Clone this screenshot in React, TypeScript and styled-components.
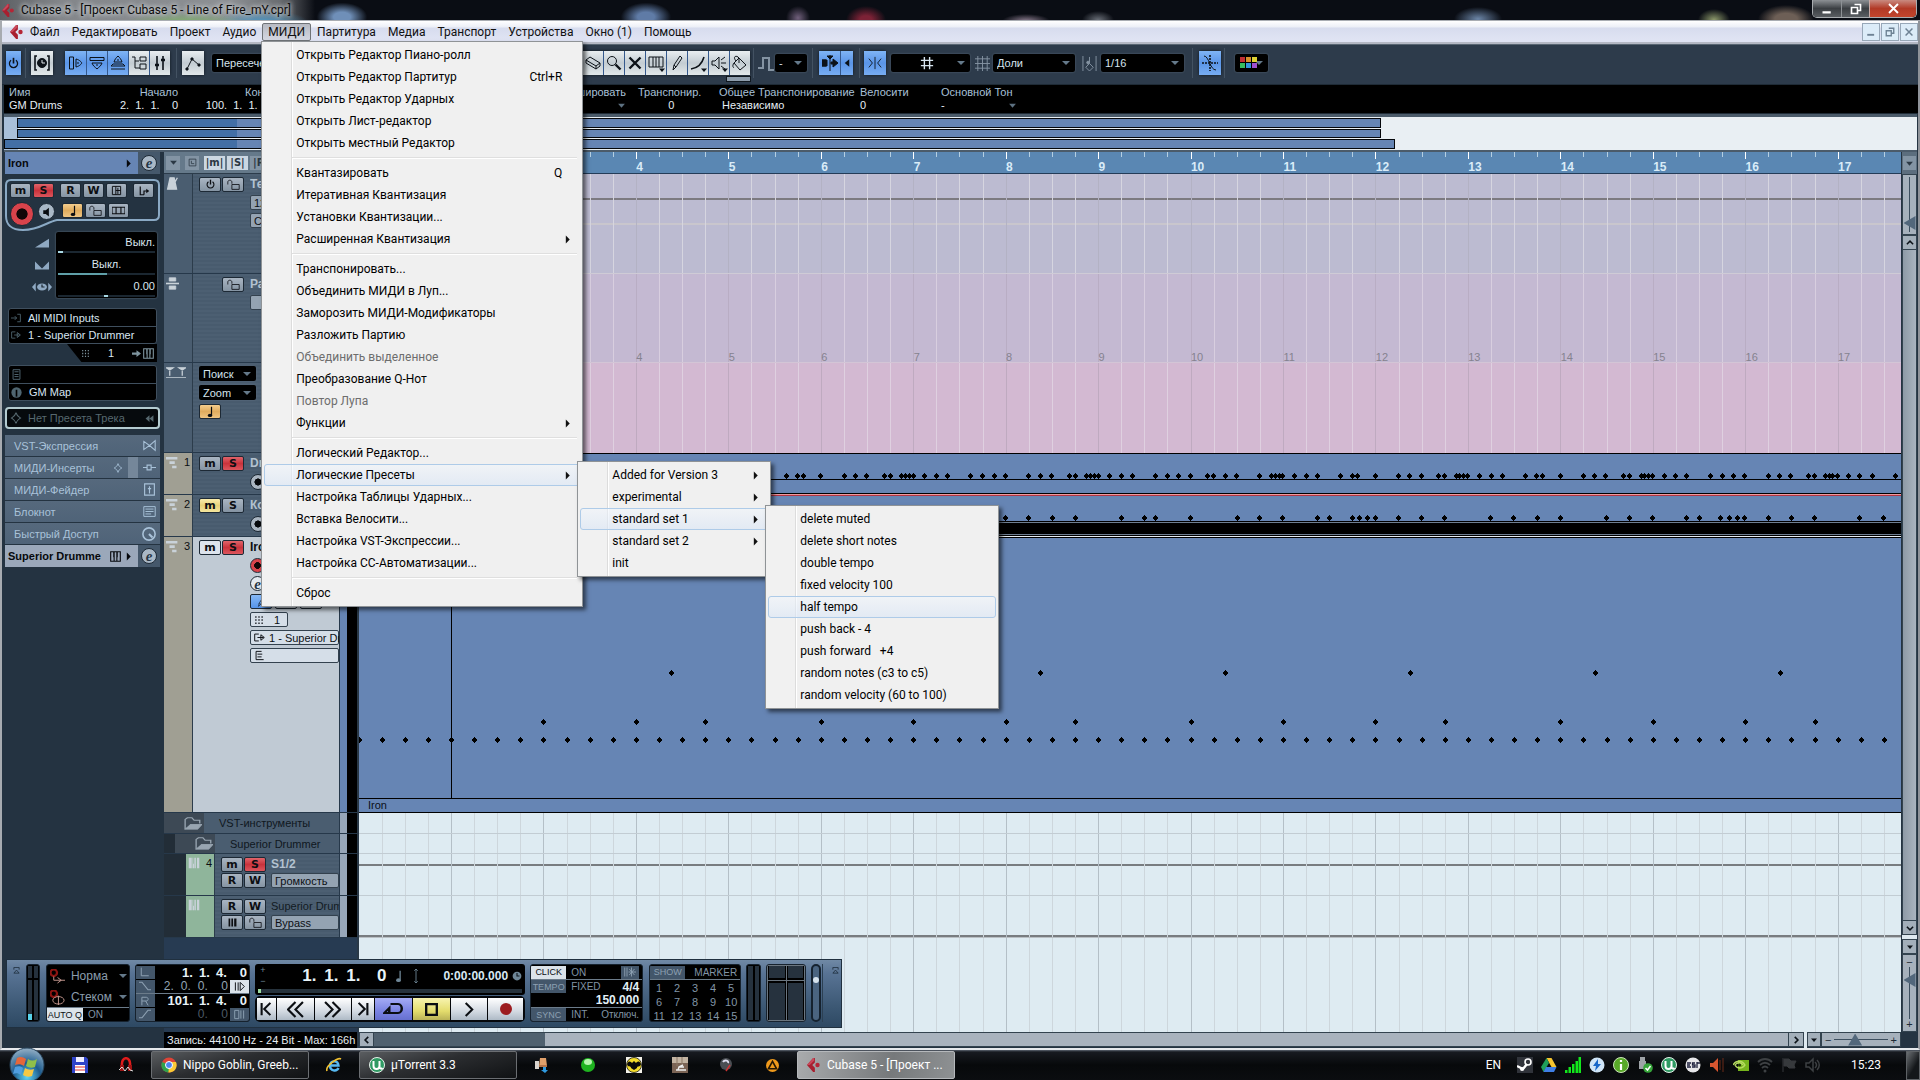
import React from 'react';
import styled, { createGlobalStyle, css } from 'styled-components';

const UI = 'Roboto, "Open Sans", sans-serif';
const PANEL = '"Liberation Sans", Arial, sans-serif';
const CAPS = '"DejaVu Sans", sans-serif';

const Global = createGlobalStyle`
  * { box-sizing: border-box; }
  html, body, #root { height: 100%; }
  body { margin: 0; overflow: hidden; background: #0a0d13; font-family: ${PANEL}; font-size: 11px; }
  button, select, input { font: inherit; color: inherit; margin: 0; padding: 0; border: 0; background: none; border-radius: 0; }
  svg { display: block; flex: none; }
`;

/* ---------- glyphs ---------- */

const GLYPHS: Record<string, React.ReactNode> = {
  power: <><path d="M5 4a5 5 0 1 0 6 0" strokeWidth="1.600" /><path d="M8 1v7" strokeWidth="2" /></>,
  clockBox: <><path d="M3 1H1v14h2M13 1h2v14h-2" strokeWidth="1.6" /><circle cx="8" cy="8" r="4.5" fill="currentColor" /><path d="M8 5v3h3" stroke="#dfe5ea" /></>,
  inspector: <><path d="M1.500 2h4v12h-4z" /><path d="M8 4c4 1 5 3 6 4-1 1-2 3-6 4zM9 8h2" /></>,
  infoline: <><path d="M1 2.500h14v3H1z" /><path d="M3 8h10c-1 3-3 4-5 6-2-2-4-3-5-6zM8 9v2" /></>,
  overview: <><path d="M8 1c2 2 3 3 4 6H4c1-3 2-4 4-6zM8 4v2M3 9h10l2 2H1zM1 14h14" /></>,
  tracks: <><path d="M4 2v11h5M4 6h4M9 2h6v4H9zM9 9h6v5H9zM1 2h3" /></>,
  mixer: <><path d="M5 1v14M11 1v14" strokeWidth="1.600" /><path d="M3 10h4M9 5h4" strokeWidth="2.400" /></>,
  automation: <><path d="M2 14 7 4l7 6" /><path d="M1 13h2v2H1zM6 3h2v2H6zM13 9h2v2h-2z" fill="currentColor" /></>,
  arrow: <path d="M4 1v12l3-3 2 5 2-1-2-4h4z" fill="currentColor" />,
  scissors: <path d="M4 14 12 2M12 14 4 2M2 14h3M11 14h3" />,
  eraser: <path d="m1 5 4-3 10 6-4 3zM1 5v3l10 6v-3M11 14l4-3V8" />,
  loupe: <><circle cx="6" cy="6" r="4.500" /><path d="m9.500 9.500 5 5" strokeWidth="2.400" /></>,
  cross: <path d="m2.500 2.500 11 11M13.500 2.500l-11 11" strokeWidth="2.400" />,
  mute: <path d="M1 2h14v10H1zM5 2v10M8 2v10M11 2v10" />,
  pencil: <path d="m4 15 1-5 6-9 2 2-6 9zM5 10l2 2" />,
  curve: <path d="M1 14C8 13 12 9 14 2" strokeWidth="1.600" />,
  speaker: <path d="M1 6h3l4-4v12l-4-4H1zM10 5l4-3M10 8h5M10 11l4 3" />,
  monitor: <path d="M2 5h4l5-4v14l-5-4H2z" fill="currentColor" stroke="none" />,
  bucket: <path d="m7 3 7 7-6 5-6-7zM4 6c-4-5 1-6 3-3v5M2 8c-2 3-1 4 0 5" />,
  step: <path d="M0 13h5V3h6v12h5" strokeWidth="2" />,
  autoscroll: <><path d="M8 0v16M0 5h4v6H0z" /><path d="M0 5h5v6H0zM9 7h2V4l5 4-5 4V9H9zM5 1h6L8 4z" fill="currentColor" /></>,
  left: <path d="M11 3v10L5 8z" fill="currentColor" stroke="none" />,
  snap: <path d="M8 1v14M1 3l4 5-4 5M15 3l-4 5 4 5" />,
  grid: <path d="M5 1v14M11 1v14M1 5h14M1 11h14" strokeWidth="1.600" />,
  gridFine: <path d="M3 0v16M8 0v16M13 0v16M0 3h16M0 8h16M0 13h16" />,
  quant: <><path d="M1 0v16M15 0v16M8 1v6M8 8l4 4-4 4-4-4z" /><circle cx="6.500" cy="7" r="1.500" fill="currentColor" /></>,
  crossfade: <><path d="M2 1c5 0 6 14 12 14" /><path d="M8 0v16M0 8h16" strokeDasharray="2 1" strokeWidth="1.600" /></>,
  lock: <path d="M1 8V5c0-3 5-3 5 0v2M6 8h9v6H6z" />,
  note: <><path d="M10 1v11" strokeWidth="1.600" /><ellipse cx="8" cy="12.500" rx="3" ry="2.300" fill="currentColor" stroke="none" /></>,
  lanes: <path d="M0 4h16v8H0zM5 4v8M11 4v8" strokeWidth="1.400" />,
  panel: <path d="M2 2h12v12H2zM7 2v12M7 8h7M10 4v9" strokeWidth="1.400" />,
  inout: <><path d="M3 2v11h5M8 13V8h5" strokeWidth="1.600" /><path d="m11 5 4 3-4 3z" fill="currentColor" stroke="none" /></>,
  metronome: <path d="M5 1h5l3 14H2zM14 1 8 12" fill="currentColor" strokeWidth="1.600" />,
  signature: <><path d="M4 1h8v4H4zM4 11h8v4H4z" fill="currentColor" /><path d="M0 8h16" strokeWidth="2" /></>,
  midi: <path d="M0 1h13v3H0zM4 6h6v3H4zM7 11h5v3H7z" fill="currentColor" stroke="none" />,
  keys: <path d="M1 1h4v14H1zM6 1h1v8h1v6H6zM8.500 1h2v14h-2zM12 1h3v14h-3z" fill="currentColor" stroke="none" />,
  bars: <path d="M1 1h3v14H1zM6 1h3v14H6zM11 1h4v14h-4z" fill="currentColor" stroke="none" />,
  piano: <path d="M1 1h14v14H1zM6 1v14M10 1v14M5.500 1v8M10.500 1v8" strokeWidth="1.600" />,
  folder: <><path d="M1 15V3l2-2h4l2 3h5v4" strokeWidth="1.200" /><path d="M1 15 6 9h10l-4 6z" fill="currentColor" /></>,
  volume: <path d="M0 13 16 3v10z" fill="currentColor" stroke="none" />,
  pan: <path d="M0 4v9h16V4l-8 8z" fill="currentColor" stroke="none" />,
  delay: <><path d="M3 3v10L0 8zM13 3v10l3-5z" fill="currentColor" stroke="none" /><circle cx="8" cy="8" r="4" fill="currentColor" stroke="none" /><path d="M8 5v3h2" stroke="#1c2833" /></>,
  input: <path d="M0 8h9M6 5l3 3-3 3M10 2h5v12h-5" strokeWidth="1.400" />,
  output: <path d="M7 3H1v10h6M5 8h9M10 4l5 4-5 4z" strokeWidth="1.400" />,
  dots: <path d="M2 3h2M7 3h2M12 3h2M2 8h2M7 8h2M12 8h2M2 13h2M7 13h2M12 13h2" strokeWidth="2.400" />,
  toRight: <path d="M0 6h8V2l8 6-8 6v-4H0z" fill="currentColor" stroke="none" />,
  list: <path d="M3 1h10v14H3zM5 4h6M5 8h6M5 11h6" strokeWidth="1.400" />,
  drum: <><circle cx="8" cy="8" r="7.500" fill="currentColor" stroke="none" /><path d="M8 4v10" stroke="#000" strokeWidth="2.400" /></>,
  diamond: <path d="M8 1c1 4 3 5 6 7-3 2-5 3-6 7-1-4-3-5-6-7 3-2 5-3 6-7z" strokeWidth="1.400" />,
  expression: <path d="m1 3 7 5-7 5zM15 2v12L8 8z" strokeWidth="1.300" />,
  slider: <path d="M0 8h5M5 5h5v6H5zM10 8h6" strokeWidth="1.400" />,
  fader: <path d="M2 1h12v14H2zM8 4v9M6 7h4" strokeWidth="1.400" />,
  notepad: <path d="M1 2h14v12H1zM3 5h10M3 8h10M3 11h7" strokeWidth="1.200" />,
  knob: <><circle cx="8" cy="8" r="7" strokeWidth="1.800" /><path d="m8 8 4 4" strokeWidth="2.400" /></>,
  markers: <path d="M0 2h6L3 5zM10 2h6l-3 3zM0 14h16M3 6v6M13 6v6" fill="currentColor" />,
  mono: <path d="M3 2v12h11M3 2h8M5 6h7M5 10h6" strokeWidth="1.400" />,
  clock: <><circle cx="8" cy="8" r="7" fill="currentColor" stroke="none" /><path d="M8 3v5h4" stroke="#10181f" strokeWidth="1.800" /></>,
  updown: <path d="M8 0v16M6 2l2-2 2 2M6 14l2 2 2-2" />,
  recCurve: <><circle cx="4" cy="4" r="3.500" stroke="#8b1512" strokeWidth="2.400" /><path d="M4 8v4h12M8 9l4 3-4 3" stroke="#c79a91" /></>,
  recStack: <><circle cx="4" cy="4" r="3.500" stroke="#8b1512" strokeWidth="2.400" /><ellipse cx="9" cy="11" rx="6" ry="4" stroke="#c79a91" /><path d="M9 6v10" stroke="#c79a91" /></>,
  locL: <path d="M2 1v13h12" strokeWidth="1.600" />,
  punchIn: <path d="M0 3h4l8 10h4" strokeWidth="1.600" />,
  punchOut: <path d="M0 13h4l8-10h4" strokeWidth="1.600" />,
  locR: <path d="M3 15V2h7c4 0 4 6 0 6H3M9 8l4 7" strokeWidth="1.600" />,
  preroll: <path d="M2 2v12M6 2v12M9 2l6 6-6 6z" strokeWidth="1.400" />,
  postroll: <path d="M1 2h6v12H1zM10 2v12M14 2v12" strokeWidth="1.400" />,
  toStart: <path d="M3 1v14M13 1 6 8l7 7" strokeWidth="2.400" />,
  toEnd: <path d="M13 1v14M3 1l7 7-7 7" strokeWidth="2.400" />,
  rew: <path d="M8 1 1 8l7 7M15 1 8 8l7 7" strokeWidth="2" />,
  fwd: <path d="m1 1 7 7-7 7M8 1l7 7-7 7" strokeWidth="2" />,
  play: <path d="m5 1 7 7-7 7" strokeWidth="2.200" />,
  stop: <path d="M3 3h10v10H3z" strokeWidth="2.200" />,
  cycle: <path d="M6 3h6c4 0 4 9 0 9H1l4-5v5" strokeWidth="2" />,
  rec: <circle cx="8" cy="8" r="6" fill="#9c1c20" stroke="none" />,
  precount: <path d="M1 2v12M4 2v12M10 2v12M6 8h10M7 4l7 8M14 4 7 12" strokeWidth="1.200" />,
  up: <path d="m3 10 5-5 5 5" strokeWidth="2.400" />,
  down: <path d="m3 6 5 5 5-5" strokeWidth="2.400" />,
  chevL: <path d="m10 3-5 5 5 5" strokeWidth="2.600" />,
  chevR: <path d="m6 3 5 5-5 5" strokeWidth="2.600" />,
  tri: <path d="M2 5h12l-6 7z" fill="currentColor" stroke="none" />,
  triR: <path d="M5 1v14l7-7z" fill="currentColor" stroke="none" />,
  rewind2: <path d="M8 2v12L1 8zM15 2v12L8 8z" fill="currentColor" stroke="none" />,
  min: <path d="M2 11h11v3H2z" fill="currentColor" stroke="none" />,
  restore: <path d="M6 2h8v8h-3M2 6h8v8H2z" strokeWidth="2.200" />,
  sheet: <path d="M2 2h12v12H2zM6 5v5h5" strokeWidth="1.400" />,
  eject: <path d="M2 6V1h12v5M2 14h12L8 7z" strokeWidth="2" />,
};

const Glyph = ({ n, s = 16, h }: { n: string; s?: number; h?: number }) => (
  <svg width={s} height={h ?? s} viewBox="0 0 16 16" fill="none" stroke="currentColor" preserveAspectRatio={h ? 'none' : undefined} aria-hidden>
    {GLYPHS[n]}
  </svg>
);

const CubaseLogo = ({ s = 16 }: { s?: number }) => (
  <svg width={s} height={s} viewBox="0 0 16 16" aria-hidden>
    <path d="M7 0 0 8l7 8h2V11L6 8l3-3V0z" fill="#a81f2f" />
    <circle cx="12" cy="8" r="2.500" fill="#b52636" />
    <path d="M7 0 0 8h3l5-5V0z" fill="#c9485a" />
  </svg>
);

/* ---------- frame ---------- */

const Screen = styled.div`
  display: flex;
  flex-direction: column;
  height: 100vh;
  overflow: hidden;
`;

const TitleBar = styled.header`
  flex: none;
  height: 21px;
  display: flex;
  align-items: center;
  gap: 6px;
  padding: 0 3px 0 2px;
  font: 12px/20px ${UI};
  color: #0b0b0b;
  border-bottom: 1px solid #a9adb3;
  background:
    radial-gradient(ellipse 28px 16px at 342px 17px, #6f8fb8 30%, transparent 90%),
    radial-gradient(ellipse 28px 16px at 646px 17px, #5f7ba6 30%, transparent 90%),
    radial-gradient(ellipse 12px 12px at 798px 18px, #71607c, transparent),
    radial-gradient(ellipse 20px 14px at 866px 20px, #7c2236 30%, transparent),
    radial-gradient(ellipse 24px 7px at 1026px 21px, #8f7f92, transparent),
    radial-gradient(ellipse 16px 9px at 1098px 20px, #6a6f78, transparent),
    radial-gradient(ellipse 24px 12px at 1478px 19px, #6c86a8, transparent),
    radial-gradient(ellipse 16px 11px at 1714px 20px, #8f9b6c, transparent),
    radial-gradient(ellipse 28px 14px at 1786px 19px, #6d5f56 40%, transparent),
    radial-gradient(ellipse 60px 10px at 185px 22px, #7fae6d, transparent),
    radial-gradient(ellipse 46px 12px at 262px 22px, #4b96c4, transparent),
    linear-gradient(90deg, #5d6064 0, #83868a 60px, #8d9094 230px, #6a6d71 280px, #0a0d14 315px);
`;

const TitleText = styled.span`
  flex: 1;
  text-shadow: 0 0 5px #d5d9dc, 0 0 5px #d5d9dc;
`;

const CaptionButtons = styled.div`
  display: flex;
  align-self: flex-start;
  height: 18px;
  border: 1px solid #a9adb0;
  border-top: 0;
  border-radius: 0 0 5px 5px;
  overflow: hidden;
`;

const CaptionButton = styled.button<{ $close?: boolean }>`
  width: ${(p) => (p.$close ? 47 : 28)}px;
  display: grid;
  place-items: center;
  color: #fff;
  border-left: ${(p) => (p.$close ? '1px solid #c9aaa5' : '1px solid #8d9195')};
  background: ${(p) => (p.$close ? 'linear-gradient(#c98a80, #b23a26 50%, #c2452c)' : 'linear-gradient(#8c9094, #3b3f43 50%, #5a5e62)')};
  &:first-child { border-left: 0; }
`;

const AppWindow = styled.main`
  flex: 1;
  min-height: 0;
  display: flex;
  flex-direction: column;
  background: #243341;
  border: 2px solid #8f9399;
  border-top: 0;
  border-bottom: 2px solid #e6e9ec;
  border-left-color: #a7abb0;
`;

const MenuBar = styled.nav`
  flex: none;
  height: 23px;
  display: flex;
  align-items: center;
  padding: 1px 0 0 8px;
  font: 12px/17px ${UI};
  color: #111;
  background: linear-gradient(#fff 0, #eceff7 6px, #d7dcee 7px, #dfe3f3 18px);
  border-bottom: 2px solid #b4b8c4;
`;

const MenuAnchor = styled.div`
  position: relative;
  display: flex;
`;

const MenuTitle = styled.button<{ $open?: boolean }>`
  padding: 0 5px;
  height: 18px;
  border: 1px solid transparent;
  border-radius: 2px;
  ${(p) => p.$open && css`
    border-color: #6f7377;
    background: linear-gradient(#b7bac2, #d4d7e2);
  `}
`;

const ChildButtons = styled.div`
  display: flex;
  gap: 1px;
  margin-left: auto;
`;

const ChildButton = styled.button`
  width: 18px;
  height: 18px;
  display: grid;
  place-items: center;
  color: #6e8294;
  border: 1px solid #98a8b8;
  background: #dcecf8;
`;

/* ---------- drop-down menus ---------- */

const Popup = styled.ul<{ $w: number; $root?: boolean }>`
  position: absolute;
  z-index: ${(p) => (p.$root ? 20 : 1)};
  top: ${(p) => (p.$root ? '100%' : '-3px')};
  left: ${(p) => (p.$root ? '-1px' : 'calc(100% - 3px)')};
  width: ${(p) => p.$w}px;
  margin: 0;
  padding: 2px;
  list-style: none;
  color: #000;
  font: 12px/20px ${UI};
  border: 1px solid #8f9396;
  background: linear-gradient(90deg, #f1f1f1 29px, #dcdcdc 29px, #dcdcdc 30px, #fff 30px, #fff 31px, #f0f0f0 31px);
  box-shadow: 3px 3px 4px rgba(0, 0, 0, 0.55);
`;

const Entry = styled.li`
  position: relative;
`;

const Divider = styled.li`
  height: 8px;
  margin: 0 3px 0 28px;
  background: linear-gradient(transparent 3px, #dfdfdf 3px, #dfdfdf 4px, #fff 4px, #fff 5px, transparent 5px);
`;

const EntryButton = styled.button<{ $hot?: boolean; $off?: boolean }>`
  display: flex;
  align-items: center;
  width: 100%;
  height: 22px;
  padding: 0 7px 0 31px;
  text-align: left;
  white-space: pre;
  border: 1px solid ${(p) => (p.$hot ? '#aecbe8' : 'transparent')};
  border-radius: 3px;
  color: ${(p) => (p.$off ? '#6d6d6d' : '#000')};
  ${(p) => p.$hot && css`background: linear-gradient(rgba(240, 246, 253, 0.5), rgba(218, 230, 246, 0.6));`}
`;

const Shortcut = styled.span`
  margin-left: auto;
  padding-right: 10px;
`;

const SubArrow = styled.span`
  margin-left: auto;
  color: #111;
`;

type Item = { t: string; key?: string; hot?: boolean; off?: boolean; sub?: Item[] | true; w?: number } | '-';

const MIDI_MENU: Item[] = [
  { t: 'Открыть Редактор Пиано-ролл' },
  { t: 'Открыть Редактор Партитур', key: 'Ctrl+R' },
  { t: 'Открыть Редактор Ударных' },
  { t: 'Открыть Лист-редактор' },
  { t: 'Открыть местный Редактор' },
  '-',
  { t: 'Квантазировать', key: 'Q' },
  { t: 'Итеративная Квантизация' },
  { t: 'Установки Квантизации...' },
  { t: 'Расширенная Квантизация', sub: true },
  '-',
  { t: 'Транспонировать...' },
  { t: 'Объединить МИДИ в Луп...' },
  { t: 'Заморозить МИДИ-Модификаторы' },
  { t: 'Разложить Партию' },
  { t: 'Объединить выделенное', off: true },
  { t: 'Преобразование Q-Нот' },
  { t: 'Повтор Лупа', off: true },
  { t: 'Функции', sub: true },
  '-',
  { t: 'Логический Редактор...' },
  {
    t: 'Логические Пресеты', hot: true, w: 194, sub: [
      { t: 'Added for Version 3', sub: true },
      { t: 'experimental', sub: true },
      {
        t: 'standard set 1', hot: true, w: 234, sub: [
          { t: 'delete muted' }, { t: 'delete short notes' }, { t: 'double tempo' },
          { t: 'fixed velocity 100' }, { t: 'half tempo', hot: true }, { t: 'push back - 4' },
          { t: 'push forward   +4' }, { t: 'random notes (c3 to c5)' }, { t: 'random velocity (60 to 100)' },
        ],
      },
      { t: 'standard set 2', sub: true },
      { t: 'init' },
    ],
  },
  { t: 'Настройка Таблицы Ударных...' },
  { t: 'Вставка Велосити...' },
  { t: 'Настройка VST-Экспрессии...' },
  { t: 'Настройка CC-Автоматизации...' },
  '-',
  { t: 'Сброс' },
];

const PopupMenu = ({ items, w, root }: { items: Item[]; w: number; root?: boolean }) => (
  <Popup $w={w} $root={root}>
    {items.map((it, i) => it === '-' ? <Divider key={i} /> : (
      <Entry key={i}>
        <EntryButton $hot={it.hot} $off={it.off}>
          {it.t}
          {it.key && <Shortcut>{it.key}</Shortcut>}
          {it.sub && <SubArrow><Glyph n="triR" s={9} /></SubArrow>}
        </EntryButton>
        {Array.isArray(it.sub) && <PopupMenu items={it.sub} w={it.w!} />}
      </Entry>
    ))}
  </Popup>
);

/* ---------- toolbar ---------- */

const Toolbar = styled.div`
  flex: none;
  display: flex;
  align-items: center;
  height: 41px;
  padding: 0 4px 3px;
  background: #2d3b4b;
  border-top: 1px solid #596673;
  border-bottom: 1px solid #1f2b36;
`;

const ToolSet = styled.div<{ $ml?: number }>`
  display: flex;
  margin-left: ${(p) => p.$ml ?? 0}px;
  border-radius: 2px;
  box-shadow: 0 0 3px #0d141b;
  position: relative;
`;

const Tool = styled.button<{ $on?: boolean; $w?: number }>`
  position: relative;
  display: grid;
  place-items: center;
  width: ${(p) => p.$w ?? 21}px;
  height: 24px;
  color: #0c1218;
  background: ${(p) => (p.$on ? 'linear-gradient(#7fb4f5, #5a95e8 50%, #78adf2)' : 'linear-gradient(#e9eef0, #c3ccd2 50%, #e2e8ea)')};
  & + & { border-left: 1px solid ${(p) => (p.$on ? '#34588c' : '#9aa3aa')}; }
`;

const ToolTick = styled.span`
  position: absolute;
  right: 0;
  bottom: 1px;
`;

const ToolStrip = styled.span`
  position: absolute;
  right: 0;
  top: 26px;
  width: 23px;
  height: 4px;
  background: #8d9cab;
  outline: 1px solid #10181f;
`;

const Rule = styled.span<{ $ml: number }>`
  width: 1px;
  height: 30px;
  margin-left: ${(p) => p.$ml}px;
  background: #435262;
`;

const Mark = styled.span<{ $ml: number }>`
  margin-left: ${(p) => p.$ml}px;
  color: #8493a2;
`;

const Pick = styled.span<{ $w: number; $ml?: number; $h?: number }>`
  display: inline-flex;
  align-items: center;
  width: ${(p) => p.$w}px;
  height: ${(p) => p.$h ?? 18}px;
  margin-left: ${(p) => p.$ml ?? 0}px;
  padding: 0 5px 0 4px;
  flex: none;
  position: relative;
  color: #d6e4ee;
  background: #000;
  border-radius: 2px;
  box-shadow: 0 0 2px #5c6d7d;
  select { appearance: none; flex: 1; min-width: 0; outline: none; }
  &::after {
    content: '';
    border: 4px solid transparent;
    border-top-color: #64798a;
    border-bottom: 0;
    pointer-events: none;
  }
`;

const PickFace = styled.span`
  position: absolute;
  inset: 0 8px 0 0;
  display: grid;
  place-items: center;
  pointer-events: none;
`;

const Swatches = styled.span`
  position: absolute;
  left: 5px;
  top: 3px;
  display: grid;
  grid-template-columns: repeat(3, 5px);
  gap: 1px;
  pointer-events: none;
  i { height: 5px; }
`;

const Choice = ({ label, value, w, ml, h, children }: { label: string; value: string; w: number; ml?: number; h?: number; children?: React.ReactNode }) => (
  <Pick $w={w} $ml={ml} $h={h}>
    <select aria-label={label}><option>{value}</option></select>
    {children}
  </Pick>
);

/* ---------- info line, overview ---------- */

const InfoLine = styled.div`
  flex: none;
  display: grid;
  grid-template-columns: 70px 99px 98px 210px 152px 81px 141px 81px 1fr;
  height: 29px;
  margin: 0 0 0 2px;
  padding: 1px 0 1px 5px;
  background: #000;
  border-bottom: 1px solid #1f2b36;
  line-height: 13px;
`;

const Field = styled.div<{ $right?: boolean; $centre?: boolean }>`
  display: flex;
  flex-direction: column;
  justify-self: ${(p) => (p.$centre ? 'start' : 'stretch')};
  white-space: pre;
  text-align: ${(p) => (p.$right ? 'right' : p.$centre ? 'center' : 'left')};
  color: #e6eef4;
  span:first-child { color: #a9c0d8; }
`;

const FieldPick = styled(Field)`
  padding-right: 12px;
`;

const Dropped = styled.span<{ $end?: boolean }>`
  display: flex;
  justify-content: ${(p) => (p.$end ? 'flex-end' : 'space-between')};
  align-items: center;
  width: ${(p) => (p.$end ? '100%' : '76px')};
  height: 13px;
  color: #e6eef4;
  svg { color: #5d7181; }
`;

const OverviewBox = styled.div`
  flex: none;
  display: flex;
  flex-direction: column;
  gap: 1px;
  height: 38px;
  margin: 0 1px 0 2px;
  padding: 1px 0;
  background: linear-gradient(90deg, #a9bfd8 0 14px, #e9eff3 14px);
  border-top: 3px solid #4b5b6a;
  border-bottom: 2px solid #4b5b6a;
`;

const OverviewTrack = styled.div<{ $from: number; $to: number }>`
  flex: 1;
  margin-left: ${(p) => p.$from}px;
  width: calc(${(p) => p.$to}% - ${(p) => p.$from}px);
  background: linear-gradient(90deg, #436fa5 0 ${(p) => 232 - p.$from}px, #6685b4 ${(p) => 232 - p.$from}px);
  border: 1px solid #05070b;
`;

/* ---------- workspace ---------- */

const Workspace = styled.div`
  position: relative;
  flex: 1;
  min-height: 0;
  display: flex;
`;

const Key = styled.button<{ $tone?: string; $w?: number }>`
  display: inline-grid;
  place-items: center;
  flex: none;
  width: ${(p) => p.$w ?? 22}px;
  height: 15px;
  font: bold 11px/12px ${CAPS};
  color: #0c0e12;
  border: 1px solid #1d2935;
  border-radius: 2px;
  background: ${(p) => ({
    red: 'linear-gradient(#e0646a, #c9333c 50%, #dc565d)',
    yellow: 'linear-gradient(#faecac, #e8d27a 50%, #f5e69e)',
    blue: 'linear-gradient(#86b9f6, #5593e8)',
    light: '#dce3ec',
    orange: 'linear-gradient(#f4cd8d, #e0ac5e 50%, #efc582)',
  } as Record<string, string>)[p.$tone ?? ''] ?? 'linear-gradient(#a9b5c2, #8594a3)'};
`;

const Dot = styled.button<{ $s?: number; $tone?: string }>`
  display: grid;
  place-items: center;
  flex: none;
  width: ${(p) => p.$s ?? 16}px;
  height: ${(p) => p.$s ?? 16}px;
  border: 1px solid #1d2935;
  border-radius: 50%;
  color: #0a0c10;
  background: ${(p) => (p.$tone === 'rec' ? 'radial-gradient(circle, #120607 34%, #d8434b 38%)' : p.$tone === 'off' ? 'radial-gradient(circle, #07090c 34%, #aab5c1 38%)' : p.$tone === 'light' ? '#e3e9f0' : '#a9b8c6')};
`;

const EditMark = styled.span`
  font: italic bold 15px/12px "Liberation Serif", serif;
  color: #263646;
`;

/* ---------- inspector ---------- */

const Inspector = styled.aside`
  flex: none;
  width: 162px;
  padding: 0 4px 0 3px;
  display: flex;
  flex-direction: column;
  color: #d9e6f2;
`;

const NameBar = styled.div<{ $bg: string }>`
  display: flex;
  align-items: center;
  flex: none;
  height: 22px;
  padding-left: 3px;
  font-weight: bold;
  color: #06080c;
  background: linear-gradient(90deg, ${(p) => p.$bg} 133px, #45586b 133px);
  > button { margin: 0 3px 0 8px; }
`;

const Grow = styled.span`
  flex: 1;
  white-space: nowrap;
`;

const Basic = styled.div`
  position: relative;
  margin-top: 4px;
  height: 54px;
  > svg { position: absolute; left: 0; top: 0; width: 100%; }
`;

const KeyRow = styled.div`
  position: relative;
  display: flex;
  align-items: center;
  gap: 2px;
  padding: 5px 0 0 5px;
  button:nth-of-type(3) { margin-left: 4px; }
  button:nth-of-type(6) { margin-left: 4px; }
`;

const KeyRowLow = styled(KeyRow)`
  align-items: flex-start;
  padding-top: 4px;
  button:nth-of-type(n + 2) { margin-top: 1px; }
  button:nth-of-type(1) { margin-right: 2px; }
  button:nth-of-type(3) { margin-left: 5px; }
`;

const Levels = styled.div`
  display: grid;
  grid-template-columns: 24px 1fr;
  gap: 0 4px;
  margin: 0 3px 0 23px;
  align-items: center;
  justify-items: end;
  color: #8fa9c2;
`;

const LevelIcons = styled.div`
  display: grid;
  grid-template-rows: repeat(3, 22px);
  place-items: center;
`;

const LevelBox = styled.div`
  width: 100%;
  background: #000;
  border-radius: 2px;
  box-shadow: 0 0 2px #6c7d8d;
  color: #dbe7f0;
`;

const Level = styled.div<{ $mid?: boolean }>`
  height: 22px;
  padding: 3px 2px 0;
  line-height: 15px;
  text-align: ${(p) => (p.$mid ? 'center' : 'right')};
`;

const LevelBar = styled.div<{ $from: number; $to: number; $c?: string }>`
  height: 2px;
  margin-top: 1px;
  background: linear-gradient(90deg, #1b2731 ${(p) => p.$from}%, ${(p) => p.$c ?? '#a9d8e4'} ${(p) => p.$from}%, ${(p) => p.$c ?? '#a9d8e4'} ${(p) => p.$to}%, #1b2731 ${(p) => p.$to}%);
`;

const Slots = styled.div<{ $mt: number }>`
  margin: ${(p) => p.$mt}px 3px 0;
  border: 1px solid #3f4f5e;
  border-radius: 3px;
  background: #000;
`;

const Slot = styled.button`
  display: flex;
  align-items: center;
  gap: 7px;
  width: 100%;
  height: 17px;
  padding-left: 2px;
  text-align: left;
  white-space: nowrap;
  svg { color: #4f6570; }
  & + & { border-top: 1px solid #3f4f5e; height: 17px; }
`;

const Channel = styled.div`
  display: flex;
  align-items: center;
  justify-content: space-between;
  width: 90px;
  height: 18px;
  margin: 0 3px 0 auto;
  padding: 0 3px 0 14px;
  background: #000;
  clip-path: polygon(0 0, 100% 0, 100% 100%, 16% 100%);
  color: #7e949e;
  input { width: 20px; text-align: center; color: #dbe7f0; }
  span { display: flex; gap: 2px; align-items: center; }
`;

const Preset = styled.button`
  display: flex;
  align-items: center;
  gap: 6px;
  height: 22px;
  margin: 6px 0;
  padding: 0 4px 0 3px;
  border: 2px solid #b4cbd0;
  border-radius: 4px;
  background: #060a0d;
  color: #56686f;
  text-align: left;
`;

const Tab = styled.button`
  display: flex;
  align-items: center;
  gap: 8px;
  height: 21px;
  margin-bottom: 1px;
  padding: 0 4px 0 9px;
  text-align: left;
  color: #a9c2d9;
  background: linear-gradient(#56697d, #4f6378);
`;

const InsertBypass = styled.span`
  width: 10px;
  height: 21px;
  margin: 0 -3px;
  background: #75879a;
`;

/* ---------- track list ---------- */

const H = { ruler: 22, tempo: 100, sign: 89, marker: 90, t1: 42, t2: 42, t3: 276, f1: 21, f2: 20, t4: 42, t5: 42 };

const TrackPane = styled.section`
  flex: none;
  width: 195px;
  overflow: hidden;
  border-right: 2px solid #2a3947;
  background: #273b52;
`;

const ListHead = styled.div`
  display: flex;
  align-items: center;
  gap: 2px;
  height: ${H.ruler}px;
  padding-left: 2px;
  background: #65798a;
  border-bottom: 1px solid #2c3c4b;
  button:nth-child(2) { margin: 0 3px; }
`;

const Filter = styled.button<{ $on?: boolean; $w?: number }>`
  display: grid;
  place-items: center;
  width: ${(p) => p.$w ?? 21}px;
  height: 14px;
  flex: none;
  font: bold 10px/12px ${CAPS};
  color: #2b3844;
  background: ${(p) => (p.$on ? '#cbd7e2' : '#8394a4')};
`;

const Track = styled.div<{ $h: number; $c?: string; $sel?: boolean }>`
  display: grid;
  grid-template-columns: auto 1fr 8px 10px;
  height: ${(p) => p.$h}px;
  overflow: hidden;
  background: ${(p) => (p.$sel ? '#c0cad4' : 'repeating-linear-gradient(#4c5f72 0 2px, #485b6e 2px 4px)')};
  border-bottom: 1px solid #26384a;
  &::after { content: ''; background: #000; grid-column: 4; grid-row: 1; }
  &::before { content: ''; background: ${(p) => p.$c ?? '#4a5d70'}; border-left: 1px solid #26384a; grid-column: 3; grid-row: 1; }
`;

const Strip = styled.div<{ $c?: string; $indent?: number; $w?: number }>`
  display: flex;
  justify-content: space-between;
  align-items: flex-start;
  width: ${(p) => (p.$w ?? 29) + (p.$indent ?? 0)}px;
  padding: 3px 2px 0 2px;
  border-left: ${(p) => p.$indent ?? 0}px solid #222d37;
  border-right: 1px solid #2c3c4b;
  background: ${(p) => p.$c ?? '#4a5d70'};
  color: #c9d2d9;
  b { font-weight: normal; color: #0b0e12; }
`;

const TrackBody = styled.div<{ $tight?: boolean }>`
  display: grid;
  grid-template-columns: auto 1fr;
  gap: ${(p) => (p.$tight ? 1 : 3)}px ${(p) => (p.$tight ? 5 : 6)}px;
  align-content: start;
  padding: 3px 0 0 6px;
  min-width: 0;
  overflow: hidden;
`;

const Pair = styled.div`
  display: flex;
  gap: 1px;
  justify-content: flex-end;
  width: 45px;
`;

const TrackName = styled.span<{ $c?: string; $plain?: boolean }>`
  line-height: 15px;
  font-size: ${(p) => (p.$plain ? 11 : 12)}px;
  font-weight: ${(p) => (p.$plain ? 'normal' : 'bold')};
  color: ${(p) => p.$c ?? '#b3c2d0'};
  white-space: nowrap;
  overflow: hidden;
`;

const Cell = styled.button<{ $w?: number; $light?: boolean }>`
  display: flex;
  align-items: center;
  gap: 4px;
  width: ${(p) => (p.$w ? `${p.$w}px` : '100%')};
  height: 15px;
  padding: 0 0 0 3px;
  white-space: nowrap;
  color: #0c0f14;
  border: 1px solid #33414e;
  border-radius: 2px;
  background: ${(p) => (p.$light ? '#d5dee8' : '#94a3b2')};
`;

const Line = styled.div`
  grid-column: 2;
  display: flex;
  gap: 3px;
  min-width: 0;
`;

const MarkerBody = styled.div`
  display: flex;
  flex-direction: column;
  align-items: flex-start;
  gap: 4px;
  padding: 3px 0 0 6px;
  overflow: hidden;
`;

const Folder = styled.div<{ $indent: number }>`
  display: flex;
  align-items: center;
  gap: 17px;
  margin-left: ${(p) => p.$indent}px;
  grid-column: 1 / 3;
  grid-row: 1;
  box-shadow: -20px 0 0 #222d37;
  color: #0f1720;
  background: linear-gradient(90deg, #3d4955 40px, #4a5d70 40px);
  svg { margin-left: 20px; color: #98a5b1; }
`;

/* ---------- arrange pane ---------- */

const BARS = 16.68;
const barPos = (bar: number) => `${(bar / BARS) * 100}%`;

const Arrange = styled.section`
  flex: 1;
  min-width: 0;
  display: flex;
  flex-direction: column;
  overflow: hidden;
`;

const Lane = styled.div<{ $h?: number; $bg: string; $line?: string }>`
  position: relative;
  flex: ${(p) => (p.$h ? 'none' : '1')};
  ${(p) => p.$h && `height: ${p.$h}px;`}
  background: ${(p) => p.$bg};
  border-bottom: ${(p) => (p.$line ? `1px solid ${p.$line}` : '0')};
  > svg { position: absolute; inset: 0; width: 100%; height: 100%; }
`;

const Numbers = styled.div<{ $ruler?: boolean }>`
  position: absolute;
  left: 0;
  right: 0;
  bottom: 0;
  display: flex;
  overflow: hidden;
  font: ${(p) => (p.$ruler ? 'bold 12px/12px' : '11px/10px')} ${PANEL};
  color: ${(p) => (p.$ruler ? '#d9ecf8' : '#85828f')};
  span { flex: 0 0 calc(100% / ${BARS}); }
`;

const BarNumbers = ({ ruler }: { ruler?: boolean }) => (
  <Numbers $ruler={ruler}>
    {Array.from({ length: 17 }, (_, i) => <span key={i}>{i + 1}</span>)}
  </Numbers>
);

const BeatGrid = ({ bar, beat, ruler }: { bar: string; beat: string; ruler?: boolean }) => (
  <svg shapeRendering="crispEdges" aria-hidden>
    {Array.from({ length: 66 }, (_, i) => i + 1).map((i) => (
      <line key={i} x1={barPos(i / 4)} x2={barPos(i / 4)} y1="0" y2={ruler ? (i % 4 ? 5 : 7) : '100%'} stroke={i % 4 ? beat : bar} />
    ))}
  </svg>
);

const Notes = ({ at, y }: { at: string[]; y: number }) => (
  <svg aria-hidden shapeRendering="crispEdges">
    {at.map((x, i) => (
      <svg key={i} x={x} y={y} overflow="visible"><path d="M-3 0 0-3 3 0 0 3z" fill="#000" /></svg>
    ))}
  </svg>
);

const TICKS = 2629;
const tickPos = (t: number) => `${((t + 1092) / TICKS) * 100}%`;

const DRUMS = [-363, -344, -334, -305, -264, -245, -227, -196, -186, -167, -160, -153, -147, -128, -107, -89, -49, -29, -9, 10, 49, 70, 88, 119, 129, 148, 155, 162, 169, 187, 208, 227, 266, 286, 305, 325, 354, 365, 385, 404, 443, 463, 470, 477, 483, 503, 523, 542, 581, 601, 610, 641, 680, 699, 719, 748, 759, 779, 785, 791, 798, 818, 838, 857, 896, 916, 925, 956, 995, 1014, 1034, 1064, 1074, 1094, 1100, 1106, 1113, 1133, 1152, 1172, 1212, 1232, 1251, 1271, 1311, 1329, 1349, 1379, 1389, 1408, 1415, 1421, 1428, 1447, 1467, 1488, 1527].map(tickPos);
const COPY = [10, 49, 90, 129, 208, 247, 266, 325, 405, 443, 482, 542, 562, 601, 613, 627, 641, 680, 719, 758, 837, 877, 917, 956, 1035, 1074, 1113, 1172, 1193, 1230, 1244, 1258, 1271, 1311, 1350, 1389, 1467, 1508].map(tickPos);
const HATS = Array.from({ length: 67 }, (_, i) => barPos(i / 4));
const SNARES = [8, 12, 15, 20, 24, 28, 31, 36, 40, 44, 47, 52, 56, 60, 63].map((b) => barPos(b / 4));
const CRASHES = [13.5, 21.5, 29.5, 37.5, 45.5, 53.5, 61.5].map((b) => barPos(b / 4));

const PartName = styled.span`
  position: absolute;
  left: 9px;
  bottom: 0;
  line-height: 13px;
  color: #0a0f18;
`;

/* ---------- scroll and zoom controls ---------- */

const SideRail = styled.div`
  flex: none;
  width: 17px;
  padding: 0 1px;
  display: flex;
  flex-direction: column;
  background: #253442;
`;

const RailHead = styled.div`
  height: 22px;
  padding: 4px 1px;
  background: #5c6e7e;
`;

const Step = styled.button<{ $w?: number }>`
  display: grid;
  place-items: center;
  flex: none;
  width: ${(p) => p.$w ?? 15}px;
  height: 15px;
  color: #0d1319;
  background: #a3afba;
  border: 1px solid #33434f;
`;

const RailTrack = styled.div`
  flex: 1;
  background: linear-gradient(90deg, #8e9aa6, #aab4bf);
  border: 1px solid #33434f;
  border-width: 0 1px;
`;

const ZoomV = styled.div<{ $h: number }>`
  flex: none;
  display: flex;
  flex-direction: column;
  align-items: center;
  height: ${(p) => p.$h}px;
  padding: 2px 0;
  line-height: 10px;
  color: #1d2a36;
  background: #a6b1bc;
  border: 1px solid #33434f;
  input {
    appearance: none;
    writing-mode: vertical-lr;
    flex: 1;
    min-height: 0;
    width: 13px;
    background: linear-gradient(90deg, transparent 6px, #3c4e5e 6px, #3c4e5e 7px, transparent 7px);
  }
  input::-webkit-slider-thumb {
    appearance: none;
    width: 12px;
    height: 14px;
    background: #52677b;
    clip-path: polygon(0 50%, 100% 0, 100% 100%);
  }
`;

const Gap = styled.div`
  height: 4px;
  background: #dfeaf1;
`;

const FootRow = styled.div`
  flex: none;
  display: flex;
  height: 16px;
  padding-left: 162px;
`;

const Status = styled.div`
  width: 195px;
  padding-left: 3px;
  line-height: 16px;
  white-space: nowrap;
  overflow: hidden;
  color: #e6edf2;
  background: #000;
  border-right: 2px solid #2a3947;
`;

const HTrack = styled.div`
  flex: 1;
  height: 15px;
  background: linear-gradient(90deg, #50616f 0 171px, #a9b3be 171px);
  border: 1px solid #33434f;
  border-width: 1px 0;
`;

const FootGap = styled.div`
  width: 3px;
  background: #dfeaf1;
`;

const ZoomH = styled.div`
  display: flex;
  align-items: center;
  gap: 3px;
  width: 80px;
  height: 15px;
  padding: 0 3px;
  line-height: 12px;
  color: #1d2a36;
  background: #a6b1bc;
  border: 1px solid #33434f;
  input {
    appearance: none;
    flex: 1;
    min-width: 0;
    height: 13px;
    background: linear-gradient(transparent 6px, #3c4e5e 6px, #3c4e5e 7px, transparent 7px);
  }
  input::-webkit-slider-thumb {
    appearance: none;
    width: 14px;
    height: 12px;
    background: #52677b;
    clip-path: polygon(50% 0, 100% 100%, 0 100%);
  }
`;

/* ---------- transport panel ---------- */

const Transport = styled.section`
  position: absolute;
  left: 4px;
  bottom: 4px;
  z-index: 5;
  display: flex;
  height: 69px;
  width: 836px;
  padding: 4px 0 5px;
  color: #8295a6;
  font-size: 10px;
  border: 1px solid #20303f;
  background: linear-gradient(#7089a5, #587394 20%, #3c5874 70%, #2e4963);
`;

const Edge = styled.button<{ $right?: boolean }>`
  width: 19px;
  padding: 3px 0 0 ${(p) => (p.$right ? 6 : 0)}px;
  display: grid;
  align-content: start;
  justify-content: center;
  color: #223241;
  border: 0 solid #2c4053;
  border-width: ${(p) => (p.$right ? '0 0 0 1px' : '0')};
`;

const Box = styled.div<{ $w: number; $ml?: number }>`
  flex: none;
  width: ${(p) => p.$w}px;
  margin-left: ${(p) => p.$ml ?? 0}px;
  background: #000;
  border: 1px solid #16222e;
  border-radius: 3px;
  overflow: hidden;
`;

const Meter = styled(Box)<{ $level?: number }>`
  display: grid;
  grid-template-columns: 1fr 1fr;
  grid-template-rows: ${(p) => (p.$level ? '12px 1fr' : '1fr')};
  gap: 2px;
  padding: 1px;
  i { background: #26323e; }
  i:nth-child(3) { background: linear-gradient(#26323e calc(100% - 6px), #58d3ea calc(100% - 6px)); }
`;

const Cross = styled(Box)`
  display: grid;
  grid-template-columns: 1fr 1fr;
  grid-template-rows: 14px 1fr;
  gap: 1px;
  padding: 1px;
  background: #6b7680;
  i { background: #26323e; border: 1px solid #000; border-width: 0 1px 2px; }
  i:nth-child(n + 3) { border-width: 2px 1px 0; }
`;

const RecRow = styled.div`
  display: flex;
  align-items: center;
  gap: 5px;
  height: 21px;
  padding: 1px 1px 0 3px;
  ${Pick} { background: none; box-shadow: none; color: #8b9dad; font-size: 12px; padding: 0 1px 0 1px; }
`;

const Bar = styled.div<{ $top?: boolean }>`
  display: flex;
  align-items: center;
  gap: 5px;
  height: 14px;
  padding-right: 3px;
  white-space: nowrap;
  border-top: ${(p) => (p.$top ? '1px solid #6b7b8a' : '0')};
  b { margin-left: auto; color: #e3f1f8; font-size: 12px; }
  em { margin-left: auto; font-style: normal; }
`;

const Chip = styled.button<{ $on?: boolean; $w: number }>`
  flex: none;
  display: grid;
  place-items: center;
  width: ${(p) => p.$w}px;
  height: 13px;
  font-size: 9px;
  color: ${(p) => (p.$on ? '#0b0f14' : '#8da0b2')};
  background: ${(p) => (p.$on ? '#dbe3ea' : '#43566a')};
`;

const Locator = styled.div<{ $line?: boolean }>`
  display: flex;
  align-items: center;
  height: 14px;
  border-top: ${(p) => (p.$line ? '1px solid #6b7b8a' : '0')};
`;

const Digits = styled.span<{ $bold?: boolean; $big?: boolean; $dim?: boolean }>`
  display: flex;
  flex: 1;
  justify-content: flex-end;
  padding-right: 2px;
  font: ${(p) => (p.$big ? 'bold 17px/20px' : p.$bold ? 'bold 13px/13px' : '12px/13px')} ${PANEL};
  color: ${(p) => (p.$dim ? '#4d5a66' : p.$bold || p.$big ? '#e8f3f8' : '#93a5b4')};
  i { font-style: normal; text-align: right; min-width: ${(p) => (p.$big ? 22 : 17)}px; }
  i:last-child { min-width: ${(p) => (p.$big ? 26 : 20)}px; }
`;

const Position = ({ v, ...rest }: { v: string; $bold?: boolean; $big?: boolean; $dim?: boolean }) => (
  <Digits {...rest}>{v.split(' ').map((p, i) => <i key={i}>{p}</i>)}</Digits>
);

const Centre = styled.div`
  display: flex;
  flex-direction: column;
  justify-content: space-between;
  width: 272px;
  margin-left: 5px;
`;

const Display = styled.div`
  height: 31px;
  padding: 1px 3px;
  background: #000;
  border-radius: 3px;
`;

const DisplayRow = styled.div`
  display: flex;
  align-items: center;
  height: 22px;
  color: #6f8797;
  > svg { margin-left: 4px; }
  time { margin-left: 20px; font-weight: bold; font-size: 12px; color: #d8e8f2; }
`;

const Nudge = styled.div`
  display: grid;
  width: 10px;
  font-size: 9px;
  button { height: 11px; line-height: 11px; }
`;

const Progress = styled.div`
  height: 4px;
  margin-top: 2px;
  background: linear-gradient(90deg, #9fe0a2 3px, #26323c 3px);
`;

const Deck = styled.div`
  display: grid;
  grid-template-columns: 19fr 37fr 37fr 22fr 37fr 37fr 37fr 35fr;
  gap: 1px;
  height: 26px;
  padding: 2px;
  background: #05070a;
  border-radius: 5px;
`;

const DeckButton = styled.button<{ $c?: string }>`
  display: grid;
  place-items: center;
  color: #0b0e12;
  background: ${(p) => p.$c ?? 'linear-gradient(#fff, #d3dae2 60%, #aebac6)'};
`;

const MarkerGrid = styled.div`
  display: grid;
  grid-template-columns: repeat(5, 18px);
  border-top: 1px solid #6b7b8a;
  padding-top: 1px;
  font-size: 11px;
  button { height: 14px; }
`;

const Master = styled.label`
  display: grid;
  place-items: center;
  width: 12px;
  margin-left: 4px;
  input {
    appearance: none;
    writing-mode: vertical-lr;
    width: 10px;
    height: 58px;
    border: 2px solid #15222f;
    border-radius: 5px;
    background: #4a6480;
  }
  input::-webkit-slider-thumb { appearance: none; width: 6px; height: 6px; border-radius: 50%; background: #d5e2ec; }
`;

/* ---------- taskbar ---------- */

const TaskBar = styled.footer`
  flex: none;
  display: flex;
  align-items: center;
  height: 30px;
  font: 12px/16px ${UI};
  color: #fff;
  background: linear-gradient(#5c6470 0, #171a20 2px, #07090b 50%, #0b0d10);
`;

const Start = styled.button`
  width: 38px;
  height: 34px;
  margin: -2px 11px 0 8px;
  position: relative;
  z-index: 6;
`;

const Quick = styled.button`
  display: grid;
  place-items: center;
  width: 46px;
  height: 28px;
`;

const Task = styled.button<{ $active?: boolean }>`
  display: flex;
  align-items: center;
  gap: 6px;
  width: 158px;
  height: 28px;
  margin: 0 2px;
  padding: 0 9px;
  white-space: nowrap;
  color: #fff;
  border: 1px solid ${(p) => (p.$active ? '#b5b8bb' : '#6b6e72')};
  border-radius: 2px;
  background: ${(p) => (p.$active ? 'linear-gradient(100deg, #a9abad, #76797b 60%, #8e9193)' : 'linear-gradient(165deg, #5a5d60, #2b2d30 45%, #101214)')};
`;

const Tray = styled.div`
  display: flex;
  align-items: center;
  margin-left: auto;
  gap: 8px;
  span { margin-right: 8px; }
  time { margin: 0 25px 0 22px; }
`;

const ShowDesktop = styled.button`
  width: 14px;
  height: 29px;
  margin-left: -8px;
  border: 1px solid #5d6165;
  background: linear-gradient(120deg, #6b6f73, #14171a 60%);
`;

const Art = ({ children, s = 16 }: { children: React.ReactNode; s?: number }) => (
  <svg width={s} height={s} viewBox="0 0 16 16" aria-hidden>{children}</svg>
);

const StartOrb = () => (
  <svg width="38" height="34" viewBox="0 0 38 34" aria-hidden>
    <defs>
      <radialGradient id="orb" cx="50%" cy="85%" r="80%">
        <stop offset="0" stopColor="#5fd6f5" /><stop offset=".5" stopColor="#1c5c8f" /><stop offset="1" stopColor="#8aa8c0" />
      </radialGradient>
    </defs>
    <circle cx="19" cy="18" r="17" fill="url(#orb)" stroke="#27445c" />
    <path d="M9 11c4-2 6-1 9 1l-2 7c-3-2-6-2-9-1z" fill="#e5673a" />
    <path d="M20 12c3 2 6 2 9 0l-2 8c-3 1-6 1-9-1z" fill="#8fc04a" />
    <path d="M7 20c3-1 6-1 8 1l-2 7c-3-2-5-2-8-1z" fill="#4f9ee0" />
    <path d="M17 21c3 2 6 2 9 1l-2 7c-3 1-6 1-9-1z" fill="#f5c944" />
  </svg>
);

const UTorrent = () => (
  <Art><circle cx="8" cy="8" r="7.500" fill="#2f9a63" stroke="#e7f2eb" /><path d="M4.500 4v5c0 4 6 4 6 0V4m0 6c.5 2 2 2 3 1" fill="none" stroke="#fff" strokeWidth="2" /></Art>
);

const QUICK: Record<string, React.ReactNode> = {
  floppy: <Art><path d="M0 0h14l2 2v14H0z" fill="#2f43c8" /><path d="M4 0h8v5H4z" fill="#eef" /><path d="M3 8h10v8H3z" fill="#fff" /><path d="M3 10h10M3 13h10" stroke="#e5322e" /></Art>,
  cans: <Art><path d="M4 8C3-1 13-1 12 8" fill="none" stroke="#e01b1b" strokeWidth="2.600" /><path d="M2 8h4v6H2zM10 8h4v6h-4z" fill="#9c1414" /><path d="M1 13l3-3 3 4 3-4 2 3 3 1" stroke="#dcdcdc" fill="none" /></Art>,
  chrome: <Art><circle cx="8" cy="8" r="7.500" fill="#dd4437" /><path d="M1 5a7.500 7.500 0 0 0 6 10.500L11 9z" fill="#2fa24c" /><path d="M7.500 15.500A7.500 7.500 0 0 0 15 5H8z" fill="#fbca34" /><circle cx="8" cy="8" r="3.500" fill="#4b85ee" stroke="#fff" /></Art>,
  ie: <Art><path d="M12.500 11c-2 4-8.500 3-8.500-2.500S12 3 12.500 8.500H5" fill="none" stroke="#57b8f0" strokeWidth="2.400" /><path d="M1 14C-1 9 12 0 15 2" fill="none" stroke="#f0c030" strokeWidth="1.600" /></Art>,
  person: <Art><path d="M6 1h6l1 8H5z" fill="#e0a06b" /><path d="M1 4h4v8H1z" fill="#d9d4cf" /><path d="M5 8h8v2H5z" fill="#b5744a" /><path d="M9 10h3v3h2l-3 3-4-3h2z" fill="#2f9ae0" /></Art>,
  ball: <Art><circle cx="8" cy="8" r="7" fill="#1fb320" /><ellipse cx="8" cy="5" rx="4" ry="3" fill="#b6f5ae" /></Art>,
  bat: <Art><path d="M0 0h16v16H0z" fill="#f4f2ea" /><circle cx="8" cy="8" r="7.500" fill="#f4dc2c" stroke="#111" strokeWidth=".8" /><path d="M1 7c2-4 4-2 5-1l2-2 2 2c1-1 3-3 5 1-1 4-4 1-4 4l-3 2-3-2c0-3-3 0-4-4z" fill="#0b0b0b" /></Art>,
  photo: <Art><path d="M0 0h16v16H0z" fill="#7b6455" /><path d="M0 0h16v6H0z" fill="#c3b4a2" /><path d="M5 0v9M10 0v7" stroke="#8c7866" /><path d="M4 13h10M7 10l4-2M6 13l1-3h5" stroke="#eee" strokeWidth="1.400" fill="none" /></Art>,
  orbit: <Art><circle cx="8" cy="7" r="6" fill="#4a4e53" /><path d="M5 5c2-3 6-1 5 1" stroke="#dde" strokeWidth="2" fill="none" /><path d="M8 14l4-6" stroke="#c33" strokeWidth="1.500" /></Art>,
  aimp: <Art s={13}><circle cx="8" cy="8" r="8" fill="#f09a1c" /><path d="M8 3l5 9H3z" fill="none" stroke="#241704" strokeWidth="2" /></Art>,
};

const TRAY: React.ReactNode[] = [
  <Art><path d="M0 0h16v16H0z" fill="#30333a" /><circle cx="11" cy="5" r="3" fill="none" stroke="#fff" strokeWidth="1.600" /><path d="m0 9 6 3 4-5" stroke="#fff" strokeWidth="2.400" fill="none" /><circle cx="5" cy="12" r="2" fill="#fff" /></Art>,
  <Art><path d="M5.500 1h5l5 9h-5z" fill="#f7c52f" /><path d="M5.500 1 0 10l2.500 5L8 6z" fill="#1f9e5b" /><path d="M5 10h10.500L13 15H2.500z" fill="#3f7fe6" /></Art>,
  <Art><path d="M0 13h2.500v3H0zM3.500 10H6v6H3.500zM7 7h2.500v9H7zM10.500 4H13v12h-2.500zM13.500 0H16v16h-2.500z" fill="#12e81c" /></Art>,
  <Art><circle cx="8" cy="8" r="7.500" fill="#cfe4f7" /><path d="M9 2 4 9h3l-1 5 6-7H9z" fill="#1766c9" /></Art>,
  <Art><circle cx="8" cy="8" r="7.500" fill="#58a928" stroke="#cbe5b9" /><path d="M8 3v2M8 7v6" stroke="#fff" strokeWidth="2.200" /></Art>,
  <Art><path d="M3 0h5v4H3zM2 4h7v8H2z" fill="#9ea3a8" /><circle cx="11" cy="11" r="4.800" fill="#36a53a" /><path d="m8.500 11 2 2 3-4" stroke="#fff" strokeWidth="1.500" fill="none" /></Art>,
  <UTorrent />,
  <Art><circle cx="8" cy="8" r="7.500" fill="#e7e7ea" /><path d="M2 6h4M2 8h3M2 10h4M10 6H7.500v2H10v2H7M12 5v6M12 6h3" stroke="#1d1f3c" fill="none" strokeWidth="1.300" /></Art>,
  <Art><path d="M1 6h3l5-5v14l-5-5H1z" fill="#d8552f" /><path d="M11 3v10M14 1v14" stroke="#6d2b19" /></Art>,
  <Art><path d="M5 3h11v11H5z" fill="#76b41c" /><path d="M0 8c3-5 9-5 12 0-3 4-8 4-10 0 2-3 6-3 8 0" fill="none" stroke="#b7dc62" strokeWidth="1.300" /><circle cx="6.500" cy="8" r="1.500" fill="#1c2c06" /></Art>,
  <Art><path d="M1 5c4-4 10-4 14 0M3 8c3-3 7-3 10 0M5 11c2-2 4-2 6 0" stroke="#3d4043" strokeWidth="1.800" fill="none" /><circle cx="8" cy="14" r="1.500" fill="#3d4043" /></Art>,
  <Art><path d="M2 1v14M3 2h5l2 2h5l-2 4 1 3H8L6 9H3z" fill="#36393c" stroke="#36393c" /></Art>,
  <Art><path d="M1 6h3l4-4v12l-4-4H1zM10 5c2 2 2 4 0 6M12 3c3 3 3 7 0 10" fill="none" stroke="#3d4043" strokeWidth="1.500" /></Art>,
];

const FOOTER: string[] = ['person', 'ball', 'bat', 'photo', 'orbit', 'aimp'];
const MENUS = ['Файл', 'Редактировать', 'Проект', 'Аудио', 'МИДИ', 'Партитура', 'Медиа', 'Транспорт', 'Устройства', 'Окно (1)', 'Помощь'];

const E = ({ s = 16, light }: { s?: number; light?: boolean }) => (
  <Dot $s={s} $tone={light ? 'light' : 'e'} aria-label="Редактор"><EditMark>e</EditMark></Dot>
);

export default function App() {
  return (
    <Screen>
      <Global />
      <TitleBar>
        <CubaseLogo s={13} />
        <TitleText>Cubase 5 - [Проект Cubase 5 - Line of Fire_mY.cpr]</TitleText>
        <CaptionButtons>
          <CaptionButton aria-label="Свернуть"><Glyph n="min" s={12} /></CaptionButton>
          <CaptionButton aria-label="Восстановить"><Glyph n="restore" s={12} /></CaptionButton>
          <CaptionButton $close aria-label="Закрыть"><Glyph n="cross" s={13} /></CaptionButton>
        </CaptionButtons>
      </TitleBar>

      <AppWindow>
        <MenuBar>
          <CubaseLogo s={14} />
          {MENUS.map((m) => (
            <MenuAnchor key={m}>
              <MenuTitle $open={m === 'МИДИ'}>{m}</MenuTitle>
              {m === 'МИДИ' && <PopupMenu items={MIDI_MENU} w={322} root />}
            </MenuAnchor>
          ))}
          <ChildButtons>
            <ChildButton aria-label="Свернуть окно"><Glyph n="min" s={10} /></ChildButton>
            <ChildButton aria-label="Восстановить окно"><Glyph n="restore" s={10} /></ChildButton>
            <ChildButton aria-label="Закрыть окно"><Glyph n="cross" s={10} /></ChildButton>
          </ChildButtons>
        </MenuBar>

        <Toolbar>
          <ToolSet><Tool $on $w={15} aria-label="Активация"><Glyph n="power" s={13} /></Tool></ToolSet>
          <Rule $ml={4} />
          <ToolSet $ml={5}><Tool $w={22} aria-label="Задержка"><Glyph n="clockBox" /></Tool></ToolSet>
          <ToolSet $ml={12}>
            {['inspector', 'infoline', 'overview', 'tracks', 'mixer'].map((g, i) => <Tool key={g} $on={i < 3} aria-label={g}><Glyph n={g} /></Tool>)}
          </ToolSet>
          <Rule $ml={6} />
          <ToolSet $ml={5}><Tool $w={22} aria-label="Автоматизация"><Glyph n="automation" /></Tool></ToolSet>
          <Choice label="Режим автоматизации" value="Пересечение" w={130} ml={8} />
          <Rule $ml={40} />
          <ToolSet $ml={157}>
            {['arrow', 'scissors', 'eraser', 'loupe', 'cross', 'mute', 'pencil', 'curve', 'speaker', 'bucket'].map((g) => (
              <Tool key={g} aria-label={g}>
                <Glyph n={g} />
                {['mute', 'curve', 'speaker'].includes(g) && <ToolTick><Glyph n="tri" s={8} /></ToolTick>}
              </Tool>
            ))}
            <ToolStrip />
          </ToolSet>
          <Rule $ml={3} />
          <Mark $ml={4}><Glyph n="step" /></Mark>
          <Choice label="Нудж" value="  -" w={32} ml={1} />
          <Rule $ml={5} />
          <ToolSet $ml={6}>
            <Tool $on aria-label="Автопрокрутка"><Glyph n="autoscroll" /></Tool>
            <Tool $on $w={13} aria-label="Пауза прокрутки"><Glyph n="left" s={12} /></Tool>
          </ToolSet>
          <Rule $ml={6} />
          <ToolSet $ml={4}><Tool $on $w={22} aria-label="Привязка"><Glyph n="snap" s={14} /></Tool></ToolSet>
          <Choice label="Тип привязки" value="" w={79} ml={5}><PickFace><Glyph n="grid" s={14} /></PickFace></Choice>
          <Mark $ml={5}><Glyph n="gridFine" s={15} /></Mark>
          <Choice label="Тип сетки" value="Доли" w={82} ml={3} />
          <Mark $ml={7}><Glyph n="quant" s={15} /></Mark>
          <Choice label="Квантизация" value="1/16" w={83} ml={4} />
          <Rule $ml={8} />
          <ToolSet $ml={6}><Tool $on $w={22} aria-label="Кроссфейд"><Glyph n="crossfade" /></Tool></ToolSet>
          <Rule $ml={3} />
          <Choice label="Цвет" value="" w={33} ml={10}>
            <Swatches>
              {['#c22f33', '#d7902c', '#dfd233', '#35bd5f', '#3195dc', '#9f50cf'].map((c) => <i key={c} style={{ background: c }} />)}
            </Swatches>
          </Choice>
        </Toolbar>

        <InfoLine>
          <Field><span>Имя</span><span>GM Drums</span></Field>
          <Field $right><span>Начало</span><span>2.  1.  1.    0</span></Field>
          <Field $right><span>Конец</span><span>100.  1.  1.    0</span></Field>
          <Field />
          <FieldPick $right><span>Заглушировать</span><Dropped $end><Glyph n="tri" s={9} /></Dropped></FieldPick>
          <Field $centre><span>Транспонир.</span><span> 0</span></Field>
          <Field><span>Общее Транспонирование</span><span> Независимо</span></Field>
          <Field><span>Велосити</span><span>0</span></Field>
          <Field><span>Основной Тон</span><Dropped>-<Glyph n="tri" s={9} /></Dropped></Field>
        </InfoLine>

        <OverviewBox>
          <OverviewTrack $from={13} $to={72} />
          <OverviewTrack $from={13} $to={72} />
          <OverviewTrack $from={0} $to={72.700} />
        </OverviewBox>

        <Workspace>
          <Inspector>
            <NameBar $bg="#6685b4"><Grow>Iron</Grow><Glyph n="triR" s={9} /><E /></NameBar>
            <Basic>
              <svg width="155" height="54" viewBox="0 0 155 54" fill="none" aria-hidden>
                <path d="M6 2h143q5 0 5 5v30q0 5-5 5H52C42 44 34 52 18 52 6 52 1 46 1 38V7q0-5 5-5z" stroke="#8aa9c4" strokeWidth="2" />
              </svg>
              <KeyRow>
                <Key $w={21}>m</Key><Key $tone="red" $w={21}>S</Key><Key $w={21}>R</Key><Key $w={21}>W</Key>
                <Key $w={21} aria-label="Дорожки"><Glyph n="panel" s={11} /></Key>
                <Key $w={21} aria-label="Вход"><Glyph n="inout" s={12} /></Key>
              </KeyRow>
              <KeyRowLow>
                <Dot $s={24} $tone="rec" aria-label="Запись" />
                <Dot $s={17} aria-label="Мониторинг"><Glyph n="monitor" s={10} /></Dot>
                <Key $tone="orange" $w={21} aria-label="Такты"><Glyph n="note" s={12} /></Key>
                <Key $w={21} aria-label="Замок"><Glyph n="lock" s={13} /></Key>
                <Key $w={21} aria-label="Полосы"><Glyph n="lanes" s={13} /></Key>
              </KeyRowLow>
            </Basic>
            <Levels>
              <LevelIcons><Glyph n="volume" s={14} /><Glyph n="pan" s={14} /><Glyph n="delay" s={20} h={14} /></LevelIcons>
              <LevelBox>
                <Level>Выкл.<LevelBar $from={0} $to={5} /></Level>
                <Level $mid>Выкл.<LevelBar $from={0} $to={50} $c="#5f9fa8" /></Level>
                <Level>0.00<LevelBar $from={47} $to={52} /></Level>
              </LevelBox>
            </Levels>
            <Slots $mt={10}>
              <Slot><Glyph n="input" s={10} />All MIDI Inputs</Slot>
              <Slot><Glyph n="output" s={10} />1 - Superior Drummer</Slot>
            </Slots>
            <Channel>
              <Glyph n="dots" s={9} />
              <input aria-label="Канал" defaultValue="1" />
              <span><Glyph n="toRight" s={9} /><Glyph n="piano" s={11} /></span>
            </Channel>
            <Slots $mt={3}>
              <Slot><Glyph n="list" s={11} /></Slot>
              <Slot><Glyph n="drum" s={11} />GM Map</Slot>
            </Slots>
            <Preset><Glyph n="diamond" s={12} /><Grow>Нет Пресета Трека</Grow><Glyph n="rewind2" s={9} /></Preset>
            <Tab><Grow>VST-Экспрессия</Grow><Glyph n="expression" s={13} /></Tab>
            <Tab><Grow>МИДИ-Инсерты</Grow><Glyph n="diamond" s={10} /><InsertBypass /><Glyph n="slider" s={13} /></Tab>
            <Tab><Grow>МИДИ-Фейдер</Grow><Glyph n="fader" s={13} /></Tab>
            <Tab><Grow>Блокнот</Grow><Glyph n="notepad" s={13} /></Tab>
            <Tab><Grow>Быстрый Доступ</Grow><Glyph n="knob" s={14} /></Tab>
            <NameBar $bg="#9ba8ba"><Grow>Superior Drumme</Grow><Glyph n="piano" s={11} />&nbsp;<Glyph n="triR" s={9} /><E /></NameBar>
          </Inspector>

          <TrackPane>
            <ListHead>
              <Filter $w={14} aria-label="Показать"><Glyph n="tri" s={9} /></Filter>
              <Filter $w={14} aria-label="Лист"><Glyph n="sheet" s={9} /></Filter>
              <Filter $on>|m|</Filter><Filter $on>|S|</Filter><Filter>|R|</Filter><Filter>|W|</Filter>
            </ListHead>
            <Track $h={H.tempo}>
              <Strip><Glyph n="metronome" s={13} /></Strip>
              <TrackBody>
                <Pair><Key aria-label="Вкл"><Glyph n="power" s={11} /></Key><Key aria-label="Замок"><Glyph n="lock" s={13} /></Key></Pair>
                <TrackName>Темп</TrackName>
                <Line><Cell $w={60}>120</Cell></Line>
                <Line><Cell $w={60}>Скачок</Cell></Line>
              </TrackBody>
            </Track>
            <Track $h={H.sign}>
              <Strip><Glyph n="signature" s={13} /></Strip>
              <TrackBody>
                <Pair><Key aria-label="Замок"><Glyph n="lock" s={13} /></Key></Pair>
                <TrackName>Размер</TrackName>
                <Line><Cell $w={60} aria-label="Размер" /></Line>
              </TrackBody>
            </Track>
            <Track $h={H.marker}>
              <Strip><Glyph n="markers" s={20} h={13} /></Strip>
              <MarkerBody>
                <Choice label="Поиск" value="Поиск" w={57} h={15} />
                <Choice label="Зум" value="Zoom" w={57} h={15} />
                <Key $tone="orange" aria-label="Такты"><Glyph n="note" s={12} /></Key>
              </MarkerBody>
            </Track>
            <Track $h={H.t1} $c="#6685b4">
              <Strip $c="#a09f93"><Glyph n="midi" s={14} /><b>1</b></Strip>
              <TrackBody>
                <Pair><Key>m</Key><Key $tone="red">S</Key></Pair><TrackName>Drums</TrackName>
                <Line><Dot $tone="off" aria-label="Запись" /></Line>
              </TrackBody>
            </Track>
            <Track $h={H.t2} $c="#6685b4">
              <Strip $c="#a09f93"><Glyph n="midi" s={14} /><b>2</b></Strip>
              <TrackBody>
                <Pair><Key $tone="yellow">m</Key><Key>S</Key></Pair><TrackName>Копия</TrackName>
                <Line><Dot $tone="off" aria-label="Запись" /></Line>
              </TrackBody>
            </Track>
            <Track $h={H.t3} $c="#6685b4" $sel>
              <Strip $c="#a09f93"><Glyph n="midi" s={14} /><b>3</b></Strip>
              <TrackBody>
                <Pair><Key $tone="light">m</Key><Key $tone="red">S</Key></Pair><TrackName $c="#0b0e12">Iron</TrackName>
                <Line><Dot $tone="rec" $s={15} aria-label="Запись" /></Line>
                <Line><E light s={15} /></Line>
                <Line>
                  <Key $tone="blue" aria-label="Правка"><Glyph n="pencil" s={10} /></Key>
                  <Key $tone="light">R</Key><Key $tone="light">W</Key>
                </Line>
                <Line><Cell $light $w={38}><Glyph n="dots" s={10} />&nbsp; 1</Cell></Line>
                <Line><Cell $light><Glyph n="output" s={11} />1 - Superior Dr</Cell></Line>
                <Line><Cell $light aria-label="Карта"><Glyph n="mono" s={11} /></Cell></Line>
              </TrackBody>
            </Track>
            <Track $h={H.f1} $c="#97a6b8"><Folder $indent={0}><Glyph n="folder" s={18} h={13} />VST-инструменты</Folder></Track>
            <Track $h={H.f2} $c="#97a6b8"><Folder $indent={11}><Glyph n="folder" s={18} h={13} />Superior Drummer</Folder></Track>
            <Track $h={H.t4} $c="#97a6b8">
              <Strip $c="#8fb59b" $indent={22}><Glyph n="keys" s={12} /><b>4</b></Strip>
              <TrackBody $tight>
                <Pair><Key>m</Key><Key $tone="red">S</Key></Pair><TrackName>S1/2</TrackName>
                <Pair><Key>R</Key><Key>W</Key></Pair><Cell>Громкость</Cell>
              </TrackBody>
            </Track>
            <Track $h={H.t5} $c="#97a6b8">
              <Strip $c="#8fb59b" $indent={22}><Glyph n="keys" s={12} /></Strip>
              <TrackBody $tight>
                <Pair><Key>R</Key><Key>W</Key></Pair><TrackName $plain $c="#121a22">Superior Drummer</TrackName>
                <Pair><Key aria-label="Каналы"><Glyph n="bars" s={9} /></Key><Key aria-label="Замок"><Glyph n="lock" s={13} /></Key></Pair><Cell>Bypass</Cell>
              </TrackBody>
            </Track>
          </TrackPane>

          <Arrange>
            <Lane $h={H.ruler} $bg="#5a87b3" $line="#243c58"><BeatGrid ruler bar="#fff" beat="#b5cfe2" /><BarNumbers ruler /></Lane>
            <Lane $h={H.tempo} $line="#cfcbd6" $bg="linear-gradient(transparent 24px, #7c7a80 24px, #7c7a80 26px, transparent 26px, transparent 49px, #c9c6cd 49px, #c9c6cd 51px, transparent 51px), #bcbbd1">
              <BeatGrid bar="#b3b2c4" beat="#d6d5e0" />
            </Lane>
            <Lane $h={H.sign} $bg="#c4b9d2" $line="#d3c5d6"><BeatGrid bar="#b9adc4" beat="#d8cedf" /><BarNumbers /></Lane>
            <Lane $h={H.marker} $bg="#d3b9d2"><BeatGrid bar="#bfaac0" beat="#dfd0e0" /></Lane>
            <Lane $h={H.t1} $line="#ee9ba0" $bg="linear-gradient(#000 1px, transparent 1px, transparent 26px, #000 26px, #000 27px, transparent 27px, transparent 40px, #000 40px), #6685b4">
              <Notes at={DRUMS} y={23} />
            </Lane>
            <Lane $h={H.t2} $line="#e8eef2" $bg="linear-gradient(#b33544 1px, transparent 1px, transparent 26px, #000 26px, #000 27px, #6f7f92 27px, #6f7f92 28px, #000 28px, #000 39px, #6f7f92 39px, #6f7f92 40px, #000 40px), #6685b4">
              <Notes at={COPY} y={23} />
            </Lane>
            <Lane $h={H.t3} $line="#000" $bg="linear-gradient(#000 1px, transparent 1px, transparent 261px, #000 261px, #000 262px, transparent 262px), #6685b4">
              <svg shapeRendering="crispEdges" aria-hidden><line x1={barPos(1)} x2={barPos(1)} y1="0" y2="261" stroke="#000" /></svg>
              <Notes at={CRASHES} y={136} />
              <Notes at={SNARES} y={185} />
              <Notes at={HATS} y={203} />
              <PartName>Iron</PartName>
            </Lane>
            <Lane $h={H.f1} $bg="#deebf2" $line="#c2ccd3"><BeatGrid bar="#b4bfc7" beat="#cdd6dc" /></Lane>
            <Lane $h={H.f2} $bg="#deebf2" $line="#c2ccd3"><BeatGrid bar="#b4bfc7" beat="#cdd6dc" /></Lane>
            <Lane $h={H.t4} $line="#c2ccd3" $bg="linear-gradient(transparent 10px, #787c80 10px, #787c80 12px, transparent 12px), #deebf2"><BeatGrid bar="#b4bfc7" beat="#cdd6dc" /></Lane>
            <Lane $h={H.t5} $line="#b9bfc4" $bg="linear-gradient(transparent 39px, #787c80 39px), #deebf2"><BeatGrid bar="#b4bfc7" beat="#cdd6dc" /></Lane>
            <Lane $bg="#deebf2"><BeatGrid bar="#b4bfc7" beat="#cdd6dc" /></Lane>
          </Arrange>

          <SideRail>
            <RailHead><Filter $w={13} aria-label="Линейка"><Glyph n="tri" s={9} /></Filter></RailHead>
            <ZoomV $h={61}><input type="range" aria-label="Масштаб дорожек" defaultValue={95} /></ZoomV>
            <Step aria-label="Вверх"><Glyph n="up" s={10} /></Step>
            <RailTrack />
            <Step aria-label="Вниз"><Glyph n="down" s={10} /></Step>
            <Gap />
            <Step aria-label="Пресеты масштаба"><Glyph n="tri" s={8} /></Step>
            <ZoomV $h={78}>−<input type="range" aria-label="Масштаб по высоте" defaultValue={16} />+</ZoomV>
          </SideRail>

          <Transport aria-label="Транспорт">
            <Edge aria-label="Меню транспорта"><Glyph n="eject" s={7} /></Edge>
            <Meter $w={14} $level={1}><i /><i /><i /><i /></Meter>
            <Box $w={84} $ml={6}>
              <RecRow><Glyph n="recCurve" s={15} /><Choice label="Режим записи" value="Норма" w={58} /></RecRow>
              <RecRow><Glyph n="recStack" s={15} /><Choice label="Режим цикла" value="Стеком" w={58} /></RecRow>
              <Bar $top><Chip $on $w={36}>AUTO Q</Chip>ON</Bar>
            </Box>
            <Box $w={115} $ml={5}>
              <Locator><Chip $w={19} aria-label="Левый локатор"><Glyph n="locL" s={10} /></Chip><Position $bold v="1. 1. 4. 0" /></Locator>
              <Locator><Chip $w={19} aria-label="Punch in"><Glyph n="punchIn" s={12} /></Chip><Position v="2. 0. 0. 0" /><Chip $on $w={19} aria-label="Pre-roll"><Glyph n="preroll" s={11} /></Chip></Locator>
              <Locator $line><Chip $w={19} aria-label="Правый локатор"><Glyph n="locR" s={10} /></Chip><Position $bold v="101. 1. 4. 0" /></Locator>
              <Locator><Chip $w={19} aria-label="Punch out"><Glyph n="punchOut" s={12} /></Chip><Position $dim v="0. 0" /><Chip $w={19} aria-label="Post-roll"><Glyph n="postroll" s={11} /></Chip></Locator>
            </Box>
            <Centre>
              <Display>
                <DisplayRow>
                  <Nudge><button>+</button><button>−</button></Nudge>
                  <Position $big v="1. 1. 1. 0" />
                  <Glyph n="note" s={13} /><Glyph n="updown" s={14} />
                  <time>0:00:00.000</time><Glyph n="clock" s={10} />
                </DisplayRow>
                <Progress />
              </Display>
              <Deck>
                <DeckButton aria-label="В начало"><Glyph n="toStart" s={14} /></DeckButton>
                <DeckButton aria-label="Назад"><Glyph n="rew" s={17} /></DeckButton>
                <DeckButton aria-label="Вперёд"><Glyph n="fwd" s={17} /></DeckButton>
                <DeckButton aria-label="В конец"><Glyph n="toEnd" s={14} /></DeckButton>
                <DeckButton $c="linear-gradient(#a5acf5, #7a83e2 60%, #6670cf)" aria-label="Цикл"><Glyph n="cycle" s={20} h={16} /></DeckButton>
                <DeckButton $c="linear-gradient(#f8f4b0, #e3dc6c 60%, #b9b257)" aria-label="Стоп"><Glyph n="stop" s={17} /></DeckButton>
                <DeckButton aria-label="Пуск"><Glyph n="play" s={15} /></DeckButton>
                <DeckButton aria-label="Запись"><Glyph n="rec" s={16} /></DeckButton>
              </Deck>
            </Centre>
            <Box $w={113} $ml={5}>
              <Bar><Chip $on $w={35}>CLICK</Chip>ON<em><Chip $w={18} aria-label="Precount"><Glyph n="precount" s={12} /></Chip></em></Bar>
              <Bar $top><Chip $w={35}>TEMPO</Chip>FIXED<b>4/4</b></Bar>
              <Bar><b>150.000</b></Bar>
              <Bar $top><Chip $w={35}>SYNC</Chip>INT.<em>Отключ.</em></Bar>
            </Box>
            <Box $w={92} $ml={6}>
              <Bar><Chip $w={35}>SHOW</Chip><em>MARKER</em></Bar>
              <MarkerGrid>{Array.from({ length: 15 }, (_, i) => <button key={i}>{i + 1}</button>)}</MarkerGrid>
            </Box>
            <Meter $w={15} $ml={5}><i /><i /></Meter>
            <Cross $w={40} $ml={5}><i /><i /><i /><i /></Cross>
            <Master><input type="range" aria-label="Громкость мастера" defaultValue={22} /></Master>
            <Edge $right aria-label="Свойства"><Glyph n="eject" s={7} /></Edge>
          </Transport>
        </Workspace>

        <FootRow>
          <Status>Запись: 44100 Hz - 24 Bit - Max: 166h</Status>
          <Step aria-label="Влево"><Glyph n="chevL" s={10} /></Step>
          <HTrack />
          <Step $w={16} aria-label="Вправо"><Glyph n="chevR" s={10} /></Step>
          <FootGap />
          <Step $w={14} aria-label="Пресеты масштаба по ширине"><Glyph n="tri" s={8} /></Step>
          <ZoomH>−<input type="range" aria-label="Масштаб по ширине" defaultValue={35} />+</ZoomH>
          <SideRail />
        </FootRow>
      </AppWindow>

      <TaskBar>
        <Start aria-label="Пуск"><StartOrb /></Start>
        <Quick aria-label="Сохранение">{QUICK.floppy}</Quick>
        <Quick aria-label="Наушники">{QUICK.cans}</Quick>
        <Task>{QUICK.chrome}Nippo Goblin, Greeb...</Task>
        <Quick aria-label="Internet Explorer">{QUICK.ie}</Quick>
        <Task><UTorrent />µTorrent 3.3</Task>
        {FOOTER.map((f) => <Quick key={f} aria-label={f}>{QUICK[f]}</Quick>)}
        <Task $active><CubaseLogo s={14} />Cubase 5 - [Проект ...</Task>
        <Tray>
          <span>EN</span>
          {TRAY.map((t, i) => <React.Fragment key={i}>{t}</React.Fragment>)}
          <time>15:23</time>
          <ShowDesktop aria-label="Показать рабочий стол" />
        </Tray>
      </TaskBar>
    </Screen>
  );
}
